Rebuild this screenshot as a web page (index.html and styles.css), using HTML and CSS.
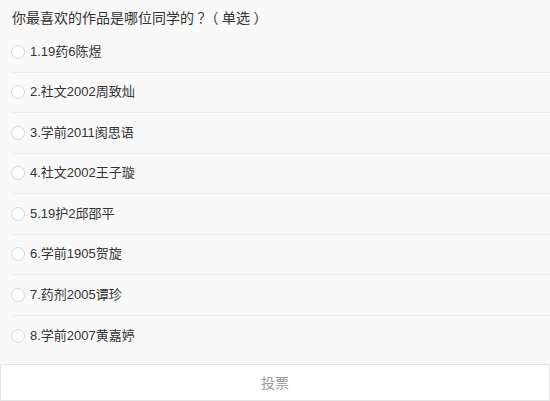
FILE: index.html
```html
<!DOCTYPE html>
<html lang="zh">
<head>
<meta charset="utf-8">
<link rel="stylesheet" href="styles.css">
</head>
<body>
<div class="poll">
  <div class="title">你最喜欢的作品是哪位同学的<span class="punct">？</span><span class="punct">（</span>单选<span class="punct">）</span></div>
  <ul class="options">
    <li class="option"><span class="radio"></span><span class="label">1.19药6陈煜</span></li>
    <li class="option"><span class="radio"></span><span class="label">2.社文2002周致灿</span></li>
    <li class="option"><span class="radio"></span><span class="label">3.学前2011阂思语</span></li>
    <li class="option"><span class="radio"></span><span class="label">4.社文2002王子璇</span></li>
    <li class="option"><span class="radio"></span><span class="label">5.19护2邱邵平</span></li>
    <li class="option"><span class="radio"></span><span class="label">6.学前1905贺旋</span></li>
    <li class="option"><span class="radio"></span><span class="label">7.药剂2005谭珍</span></li>
    <li class="option last"><span class="radio"></span><span class="label">8.学前2007黄嘉婷</span></li>
  </ul>
  <div class="submit">投票</div>
</div>
</body>
</html>
```
FILE: styles.css
```css
html, body {
  margin: 0;
  padding: 0;
  background: #f9f9f9;
}
body {
  font-family: "Liberation Sans", "Noto Sans CJK SC", sans-serif;
  color: #333;
  width: 550px;
  height: 401px;
  overflow: hidden;
}
.title {
  height: 32px;
  box-sizing: border-box;
  padding: 9px 0 0 12px;
  font-size: 14px;
  line-height: 18px;
  color: #333;
}
.punct {
  display: inline-block;
  width: 14px;
  text-align: center;
  font-feature-settings: "halt" 1;
}
.options {
  list-style: none;
  margin: 0;
  padding: 0 0 8px 12px;
}
.option {
  height: 40.5px;
  box-sizing: border-box;
  display: flex;
  align-items: center;
  border-bottom: 1px solid #ececec;
  font-size: 13px;
}
.option.last {
  border-bottom: none;
}
.radio {
  width: 14px;
  height: 14px;
  box-sizing: border-box;
  border: 1px solid #d6d6d6;
  border-radius: 50%;
  background: #fff;
  margin-left: -1px;
  margin-right: 5px;
  flex: none;
}
.label {
  line-height: 16px;
}
.submit {
  height: 37px;
  box-sizing: border-box;
  border: 1px solid #e6e6e6;
  background: #fff;
  display: flex;
  align-items: center;
  justify-content: center;
  padding-bottom: 2px;
  font-size: 14px;
  color: #999;
}
```
